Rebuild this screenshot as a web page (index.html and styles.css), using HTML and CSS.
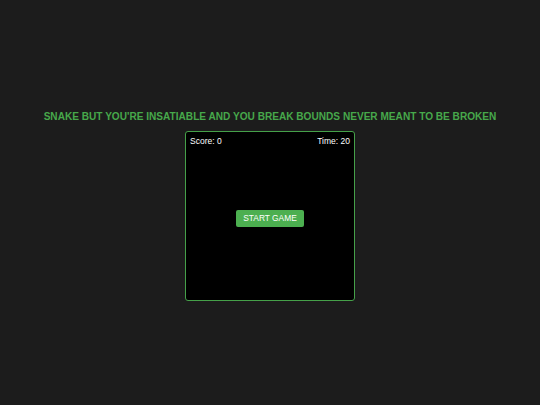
FILE: index.html
```html
<!DOCTYPE html>
<html>
<head>
<meta charset="utf-8">
<link rel="stylesheet" href="styles.css">
</head>
<body>
<main class="page">
  <h1 class="title">SNAKE BUT YOU'RE INSATIABLE AND YOU BREAK BOUNDS NEVER MEANT TO BE BROKEN</h1>
  <div class="board">
    <div class="hud">
      <span class="score">Score: 0</span>
      <span class="time">Time: 20</span>
    </div>
    <div class="center">
      <button class="start">START GAME</button>
    </div>
  </div>
</main>
</body>
</html>
```
FILE: styles.css
```css
html, body {
  margin: 0;
  padding: 0;
  background: #1c1c1c;
  width: 540px;
  height: 405px;
  overflow: hidden;
  font-family: "Liberation Sans", Arial, sans-serif;
}
.page {
  display: flex;
  flex-direction: column;
  align-items: center;
  padding-top: 111px;
}
.title {
  margin: 0 0 8px 0;
  font-size: 10.1px;
  font-weight: bold;
  color: #47a84b;
  line-height: 12px;
  white-space: nowrap;
}
.board {
  width: 168px;
  height: 168px;
  border: 1px solid #45a049;
  border-radius: 3px;
  background: #000;
  display: flex;
  flex-direction: column;
}
.hud {
  display: flex;
  justify-content: space-between;
  padding: 4px 4px 0 4px;
  color: #fff;
  font-size: 8.5px;
  line-height: 10px;
}
.center {
  flex: 1;
  display: flex;
  align-items: center;
  justify-content: center;
  padding-bottom: 10px;
}
.start {
  background: #4caf50;
  color: #fff;
  border: none;
  border-radius: 2px;
  font-family: "Liberation Sans", Arial, sans-serif;
  font-size: 8.4px;
  padding: 0;
  width: 68px;
  height: 17px;
  cursor: pointer;
}
```
